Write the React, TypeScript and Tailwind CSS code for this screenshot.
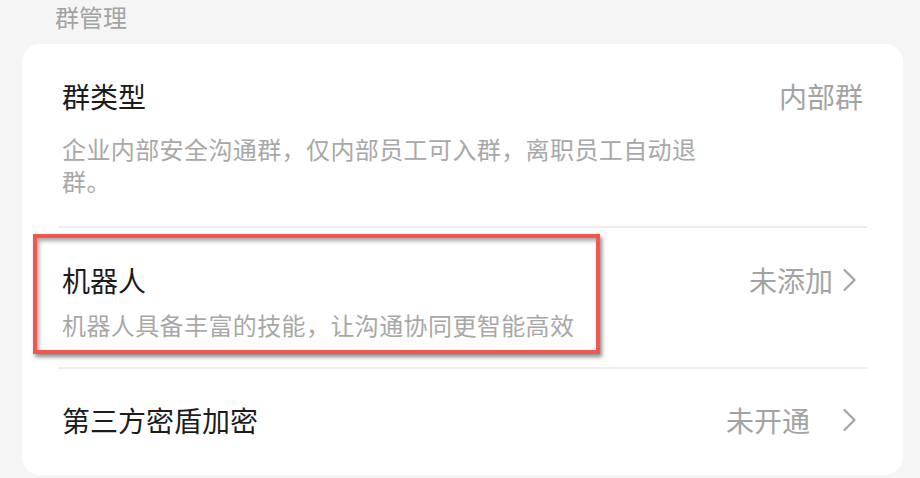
const font = { fontFamily: '"Noto Sans CJK SC", "Noto Sans", sans-serif' };

function Chevron() {
  return (
    <svg width="14" height="24" viewBox="0 0 14 24" fill="none" className="shrink-0 mr-[6px]">
      <path d="M1.5 2l10 10-10 10" stroke="#a3a3a3" strokeWidth="2.2" strokeLinecap="round" strokeLinejoin="round" />
    </svg>
  );
}

export default function App() {
  return (
    <div className="relative w-[920px] h-[478px] overflow-hidden bg-[#f5f5f5]" style={font}>
      {/* section header */}
      <div className="pl-[55px] h-[44px] text-[24px] leading-[34px] text-[#a3a3a3]">群管理</div>

      {/* card */}
      <div className="mx-[22px] w-[881px] rounded-[18px] bg-white">
        {/* 群类型 */}
        <div className="px-10 pt-8 pb-[29px]">
          <div className="flex items-start justify-between">
            <div className="text-[28px] leading-[40px] text-[#1c1c1c]">群类型</div>
            <div className="text-[28px] leading-[40px] text-[#a3a3a3]">内部群</div>
          </div>
          <p className="mt-[17px] max-w-[645px] text-[24px] leading-[32px] tracking-[0.4px] text-[#a8a8a8]">
            企业内部安全沟通群，仅内部员工可入群，离职员工自动退群。
          </p>
        </div>
        <div className="mx-9 h-[2px] bg-[#eeeeee]" />

        {/* 机器人 */}
        <div className="px-10 pt-[32px] pb-[26px]">
          <div className="flex items-start justify-between">
            <div className="text-[28px] leading-[40px] text-[#1c1c1c]">机器人</div>
            <div className="flex items-center gap-[10px] text-[28px] leading-[40px] text-[#a3a3a3]">
              <span>未添加</span>
              <Chevron />
            </div>
          </div>
          <p className="mt-[9px] text-[24px] leading-[32px] tracking-[0.4px] text-[#a8a8a8]">
            机器人具备丰富的技能，让沟通协同更智能高效
          </p>
        </div>
        <div className="mx-9 h-[2px] bg-[#eeeeee]" />

        {/* 第三方密盾加密 */}
        <div className="px-10 pt-[31px] pb-[35px]">
          <div className="flex items-center justify-between">
            <div className="text-[28px] leading-[40px] text-[#1c1c1c]">第三方密盾加密</div>
            <div className="flex items-center gap-[33px] text-[28px] leading-[40px] text-[#a3a3a3]">
              <span>未开通</span>
              <Chevron />
            </div>
          </div>
        </div>
      </div>

      {/* annotation highlight */}
      <div className="absolute left-[33px] top-[234px] w-[567px] h-[120px] border-4 border-[#f4574b] shadow-[2px_3px_4px_rgba(0,0,0,0.45),inset_2px_3px_4px_rgba(0,0,0,0.35)]" />
    </div>
  );
}
